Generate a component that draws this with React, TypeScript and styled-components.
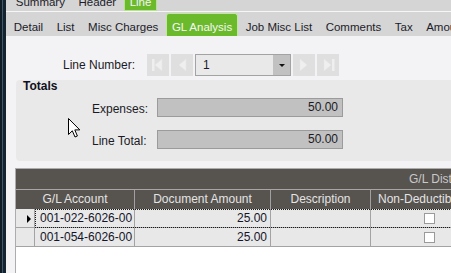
import React from "react";
import styled, { createGlobalStyle } from "styled-components";

const GlobalStyle = createGlobalStyle`
  html, body {
    margin: 0;
    padding: 0;
  }
  body {
    width: 451px;
    height: 273px;
    overflow: hidden;
    background: #f3f3f5;
    font-family: "Liberation Sans", Arial, sans-serif;
    font-size: 12px;
    color: #1b1b26;
  }
`;

const topTabs = ["Summary", "Header", "Line"];
const subTabs = ["Detail", "List", "Misc Charges", "GL Analysis", "Job Misc List", "Comments", "Tax", "Amounts"];

const rows = [
  { account: "001-022-6026-00", amount: "25.00", current: true },
  { account: "001-054-6026-00", amount: "25.00", current: false },
];

function NavIcon({ dir, end }: { dir: "left" | "right"; end?: boolean }) {
  const tri = dir === "left" ? "15,5 8,11 15,17" : "7,5 14,11 7,17";
  const bar = dir === "left" ? 5 : 15;
  return (
    <svg width="22" height="22" viewBox="0 0 22 22">
      {end && <rect x={bar} y="5" width="2.5" height="12" fill="#efefef" />}
      <polygon points={tri} fill="#efefef" stroke="#e6e6e6" strokeWidth="0.6" />
    </svg>
  );
}

export default function App() {
  return (
    <>
      <GlobalStyle />
      <Shell>
        <Strip />
        <Main>
          <TopTabs>
            {topTabs.map((t) => (
              <TopTab key={t} $active={t === "Line"}>
                {t}
              </TopTab>
            ))}
          </TopTabs>
          <SubTabs>
            {subTabs.map((t) => (
              <SubTab key={t} $active={t === "GL Analysis"}>
                {t}
              </SubTab>
            ))}
          </SubTabs>

          <Content>
            <LineRow>
              <LineLabel>Line Number:</LineLabel>
              <NavButton>
                <NavIcon dir="left" end />
              </NavButton>
              <NavButton>
                <NavIcon dir="left" />
              </NavButton>
              <Select>
                <SelectValue>1</SelectValue>
                <SelectArrow>
                  <Caret />
                </SelectArrow>
              </Select>
              <NavButton>
                <NavIcon dir="right" />
              </NavButton>
              <NavButton>
                <NavIcon dir="right" end />
              </NavButton>
            </LineRow>

            <Panel>
              <PanelTitle>Totals</PanelTitle>
              <FieldGrid>
                <FieldLabel>Expenses:</FieldLabel>
                <ReadOnlyField>50.00</ReadOnlyField>
                <FieldLabel>Line Total:</FieldLabel>
                <ReadOnlyField>50.00</ReadOnlyField>
              </FieldGrid>
            </Panel>

            <Grid>
              <GroupHeader>
                <GroupLabel>G/L Distribution</GroupLabel>
              </GroupHeader>
              <HeaderRow>
                <HeadCell $span={2}>G/L Account</HeadCell>
                <HeadCell>Document Amount</HeadCell>
                <HeadCell>Description</HeadCell>
                <HeadCell $left>Non-Deductible</HeadCell>
                <HeadCell />
              </HeaderRow>
              {rows.map((r) => (
                <DataRow key={r.account} $current={r.current}>
                  <RowHeader>{r.current && <RowPointer />}</RowHeader>
                  <Cell>{r.account}</Cell>
                  <Cell $right>{r.amount}</Cell>
                  <Cell />
                  <Cell $center>
                    <CheckBox />
                  </Cell>
                  <Cell />
                </DataRow>
              ))}
            </Grid>
          </Content>
        </Main>

        <Cursor width="13" height="21" viewBox="0 0 13 21">
          <path
            d="M0.5 0.5 L0.5 16.5 L4.3 12.8 L7 19 L9.4 18 L6.8 11.9 L11.8 11.9 Z"
            fill="#ffffff"
            stroke="#000000"
            strokeWidth="1"
            strokeLinejoin="miter"
          />
        </Cursor>
      </Shell>
    </>
  );
}

const Shell = styled.div`
  position: relative;
  display: flex;
  width: 451px;
  height: 273px;
  overflow: hidden;
`;

const Strip = styled.div`
  flex: none;
  width: 6px;
  background: linear-gradient(to right, #0f1c26 0 2px, #3d5a6a 2px 3px, #14232d 3px);
`;

const Main = styled.div`
  flex: 1;
  min-width: 0;
  display: flex;
  flex-direction: column;
  overflow: hidden;
`;

const TopTabs = styled.div`
  flex: none;
  height: 11px;
  display: flex;
  align-items: flex-start;
  padding-left: 3px;
  background: #d5d5d5;
  border-bottom: 1px solid #f6f6f6;
  overflow: hidden;
`;

const TopTab = styled.div<{ $active?: boolean }>`
  height: 15px;
  margin: -5px 0.75px 0;
  padding: 0 5px;
  line-height: 15px;
  font-size: 11.5px;
  border: 1px solid ${(p) => (p.$active ? "#b9e095" : "transparent")};
  border-top: none;
  background: ${(p) => (p.$active ? "#6bba2b" : "transparent")};
  color: ${(p) => (p.$active ? "#f4f4f4" : "#1c1c2a")};
`;

const SubTabs = styled.div`
  flex: none;
  height: 24px;
  display: flex;
  align-items: flex-end;
  padding-left: 1px;
  background: #d5d5d5;
  white-space: nowrap;
`;

const SubTab = styled.div<{ $active?: boolean }>`
  box-sizing: border-box;
  height: 23px;
  margin: 0 0.75px;
  padding: 4px 5px 0;
  display: flex;
  align-items: center;
  font-size: 11.5px;
  border: 1px solid ${(p) => (p.$active ? "#c3e6a3" : "transparent")};
  border-bottom: none;
  border-radius: 3px 3px 0 0;
  background: ${(p) => (p.$active ? "#6bba2b" : "transparent")};
  color: ${(p) => (p.$active ? "#f6f6f6" : "#1c1c2a")};
`;

const Content = styled.div`
  flex: 1;
  display: flex;
  flex-direction: column;
  padding-top: 18px;
  min-height: 0;
`;

const LineRow = styled.div`
  flex: none;
  height: 22px;
  display: flex;
  align-items: center;
  padding-left: 57px;
`;

const LineLabel = styled.div`
  width: 84px;
  white-space: nowrap;
`;

const NavButton = styled.div`
  flex: none;
  width: 22px;
  height: 22px;
  margin-right: 2px;
  background: #dfdfdf;
  display: flex;
`;

const Select = styled.div`
  flex: none;
  box-sizing: border-box;
  width: 96px;
  height: 22px;
  margin-right: 2px;
  display: flex;
  border: 1px solid #a3a3a3;
  background: #e9e9e9;
`;

const SelectValue = styled.div`
  flex: 1;
  padding-left: 7px;
  line-height: 20px;
`;

const SelectArrow = styled.div`
  width: 17px;
  background: #c1c1c1;
  display: flex;
  align-items: center;
  justify-content: center;
`;

const Caret = styled.div`
  width: 0;
  height: 0;
  border-left: 3px solid transparent;
  border-right: 3px solid transparent;
  border-top: 3px solid #111;
  margin-top: 1px;
`;

const Panel = styled.div`
  flex: none;
  height: 81px;
  margin: 4px -20px 0 10px;
  background: #e9e9e9;
  border-radius: 4px;
`;

const PanelTitle = styled.div`
  padding-left: 7px;
  line-height: 13px;
  font-weight: bold;
  color: #101020;
`;

const FieldGrid = styled.div`
  display: grid;
  grid-template-columns: 56px 186px;
  column-gap: 9px;
  row-gap: 13px;
  align-items: center;
  margin: 5px 0 0 76px;
`;

const FieldLabel = styled.div`
  white-space: nowrap;
  padding-top: 2px;
`;

const ReadOnlyField = styled.div`
  box-sizing: border-box;
  height: 19px;
  padding-right: 4px;
  line-height: 17px;
  text-align: right;
  border: 1px solid #9b9b9b;
  background: #c1c1c1;
`;

const columns = "19px 100px 136px 100px 116px 1fr";

const Grid = styled.div`
  flex: 1;
  display: flex;
  flex-direction: column;
  margin: 7px 0 0 9px;
  width: 560px;
  border-top: 1px solid #acacac;
  border-left: 1px solid #acacac;
  background: #ffffff;
`;

const GroupHeader = styled.div`
  height: 20px;
  display: grid;
  grid-template-columns: ${columns};
  background: #57534f;
  border-bottom: 1px solid #a6a6a6;
`;

const GroupLabel = styled.div`
  grid-column: 5 / -1;
  padding-left: 38px;
  line-height: 20px;
  color: #c9c9c9;
  white-space: nowrap;
`;

const HeaderRow = styled.div`
  height: 19px;
  display: grid;
  grid-template-columns: ${columns};
  background: #57534f;
`;

const HeadCell = styled.div<{ $span?: number; $left?: boolean }>`
  grid-column: span ${(p) => p.$span ?? 1};
  border-right: 1px solid #a0a0a0;
  line-height: 19px;
  color: #e4e4e4;
  white-space: nowrap;
  overflow: hidden;
  text-align: ${(p) => (p.$left ? "left" : "center")};
  padding-left: ${(p) => (p.$left ? "7px" : "0")};
`;

const DataRow = styled.div<{ $current?: boolean }>`
  position: relative;
  height: 19px;
  display: grid;
  grid-template-columns: ${columns};
  &::after {
    content: "";
    display: ${(p) => (p.$current ? "block" : "none")};
    position: absolute;
    left: 19px;
    right: 0;
    top: 0;
    bottom: 0;
    border-top: 1px dotted #1a1a1a;
    border-bottom: 1px dotted #1a1a1a;
    border-left: 1px dotted #1a1a1a;
  }
`;

const Cell = styled.div<{ $right?: boolean; $center?: boolean }>`
  box-sizing: border-box;
  border-right: 1px solid #a3a3a3;
  border-bottom: 1px solid #a3a3a3;
  background: #e8e8e8;
  padding: 0 ${(p) => (p.$right ? "3px" : "5px")};
  line-height: 18px;
  white-space: nowrap;
  display: ${(p) => (p.$center ? "flex" : "block")};
  align-items: center;
  justify-content: center;
  text-align: ${(p) => (p.$right ? "right" : "left")};
  color: #15152a;
`;

const RowHeader = styled(Cell)`
  padding: 0;
  display: flex;
  align-items: center;
  padding-left: 7px;
`;

const RowPointer = styled.div`
  width: 0;
  height: 0;
  border-top: 4px solid transparent;
  border-bottom: 4px solid transparent;
  border-left: 4px solid #000;
  margin-top: 2px;
`;

const CheckBox = styled.div`
  box-sizing: border-box;
  width: 11px;
  height: 11px;
  margin-left: 1px;
  border: 1px solid #9a9a9a;
  background: #ffffff;
`;

const Cursor = styled.svg`
  position: absolute;
  left: 68px;
  top: 118px;
`;
